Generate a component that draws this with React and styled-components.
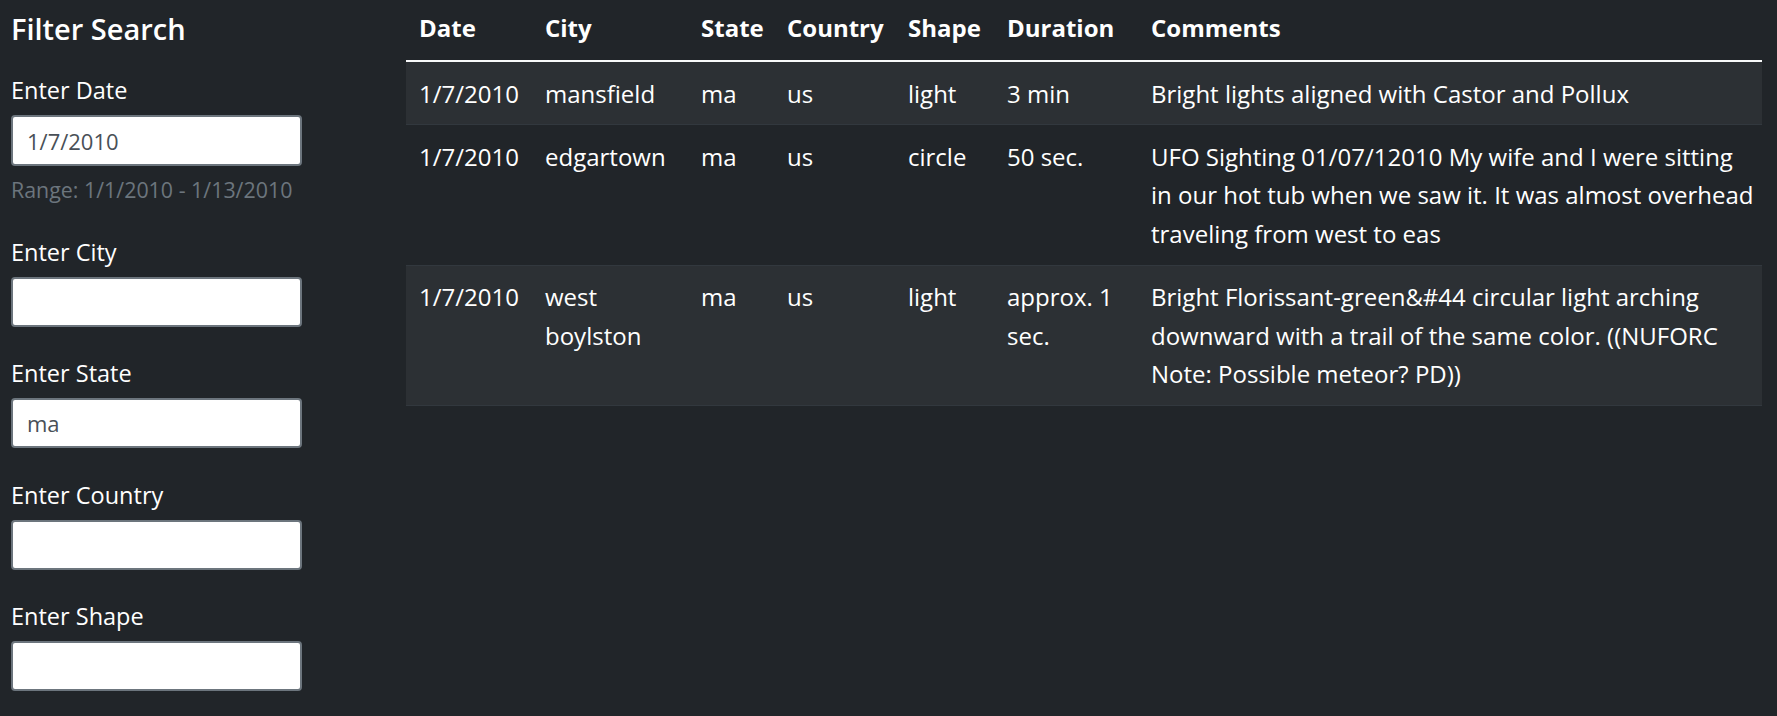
import React from 'react';
import styled, { createGlobalStyle } from 'styled-components';

const GlobalStyle = createGlobalStyle`
  body {
    margin: 0;
    background: #212529;
    color: #fff;
    font-family: 'Open Sans', 'Noto Sans', sans-serif;
  }
`;

const Page = styled.div`
  display: flex;
  min-height: 716px;
`;

const Sidebar = styled.aside`
  width: 406px;
  flex-shrink: 0;
  box-sizing: border-box;
  padding: 10px 0 0 11px;
  display: flex;
  flex-direction: column;
`;

const Heading = styled.h3`
  margin: 0 0 27px;
  font-size: 29px;
  line-height: 37px;
  font-weight: 600;
`;

const FormGroup = styled.div`
  display: flex;
  flex-direction: column;
  gap: 8px;
  margin-bottom: 30.5px;
`;

const Label = styled.label`
  font-size: 23.5px;
  line-height: 33px;
`;

const Input = styled.input`
  width: 291px;
  height: ${(p) => (p.$tall ? 51 : 50)}px;
  box-sizing: border-box;
  padding: 0 14px;
  border: 2px solid #6c757d;
  border-radius: 4px;
  background: #fff;
  color: #495057;
  font-family: inherit;
  font-size: 22px;
  outline: none;
`;

const Hint = styled.small`
  font-size: 21.4px;
  line-height: 31px;
  color: #6c757d;
`;

const Main = styled.main`
  flex: 1;
  padding-right: 15px;
`;

const Table = styled.table`
  width: 100%;
  border-collapse: collapse;
  table-layout: fixed;
  font-size: 24px;
  line-height: 38.4px;
`;

const Th = styled.th`
  text-align: left;
  font-weight: 700;
  padding: 9px 13px 12.6px;
  border-bottom: 2px solid #f8f9fa;
  vertical-align: bottom;
`;

const Row = styled.tr`
  background: ${(p) => (p.$striped ? '#2c3034' : 'transparent')};
`;

const Td = styled.td`
  padding: 12.5px ${(p) => (p.$last ? 4 : 13)}px 11.5px 13px;
  border-bottom: 1px solid #32383e;
  vertical-align: top;
`;

const columns = [
  { key: 'date', label: 'Date', width: 126 },
  { key: 'city', label: 'City', width: 156 },
  { key: 'state', label: 'State', width: 86 },
  { key: 'country', label: 'Country', width: 121 },
  { key: 'shape', label: 'Shape', width: 99 },
  { key: 'duration', label: 'Duration', width: 144 },
  { key: 'comments', label: 'Comments' },
];

const sightings = [
  {
    date: '1/7/2010',
    city: 'mansfield',
    state: 'ma',
    country: 'us',
    shape: 'light',
    duration: '3 min',
    comments: 'Bright lights aligned with Castor and Pollux',
  },
  {
    date: '1/7/2010',
    city: 'edgartown',
    state: 'ma',
    country: 'us',
    shape: 'circle',
    duration: '50 sec.',
    comments:
      'UFO Sighting 01/07/12010 My wife and I were sitting in our hot tub when we saw it. It was almost overhead traveling from west to eas',
  },
  {
    date: '1/7/2010',
    city: 'west boylston',
    state: 'ma',
    country: 'us',
    shape: 'light',
    duration: 'approx. 1 sec.',
    comments:
      'Bright Florissant-green&#44 circular light arching downward with a trail of the same color. ((NUFORC Note: Possible meteor? PD))',
  },
];

const filters = [
  { label: 'Enter City', value: '' },
  { label: 'Enter State', value: 'ma' },
  { label: 'Enter Country', value: '' },
  { label: 'Enter Shape', value: '' },
];

const App = () => {
  return (
    <Page>
      <GlobalStyle />
      <Sidebar>
        <Heading>Filter Search</Heading>
        <FormGroup>
          <Label>Enter Date</Label>
          <Input $tall type="text" defaultValue="1/7/2010" />
          <Hint>Range: 1/1/2010 - 1/13/2010</Hint>
        </FormGroup>
        {filters.map((f) => (
          <FormGroup key={f.label}>
            <Label>{f.label}</Label>
            <Input type="text" defaultValue={f.value} />
          </FormGroup>
        ))}
      </Sidebar>
      <Main>
        <Table>
          <colgroup>
            {columns.map((c) => (
              <col key={c.key} style={c.width ? { width: c.width } : undefined} />
            ))}
          </colgroup>
          <thead>
            <tr>
              {columns.map((c) => (
                <Th key={c.key}>{c.label}</Th>
              ))}
            </tr>
          </thead>
          <tbody>
            {sightings.map((s, i) => (
              <Row key={i} $striped={i % 2 === 0}>
                {columns.map((c) => (
                  <Td key={c.key} $last={c.key === 'comments'}>
                    {s[c.key]}
                  </Td>
                ))}
              </Row>
            ))}
          </tbody>
        </Table>
      </Main>
    </Page>
  );
};

export default App;
